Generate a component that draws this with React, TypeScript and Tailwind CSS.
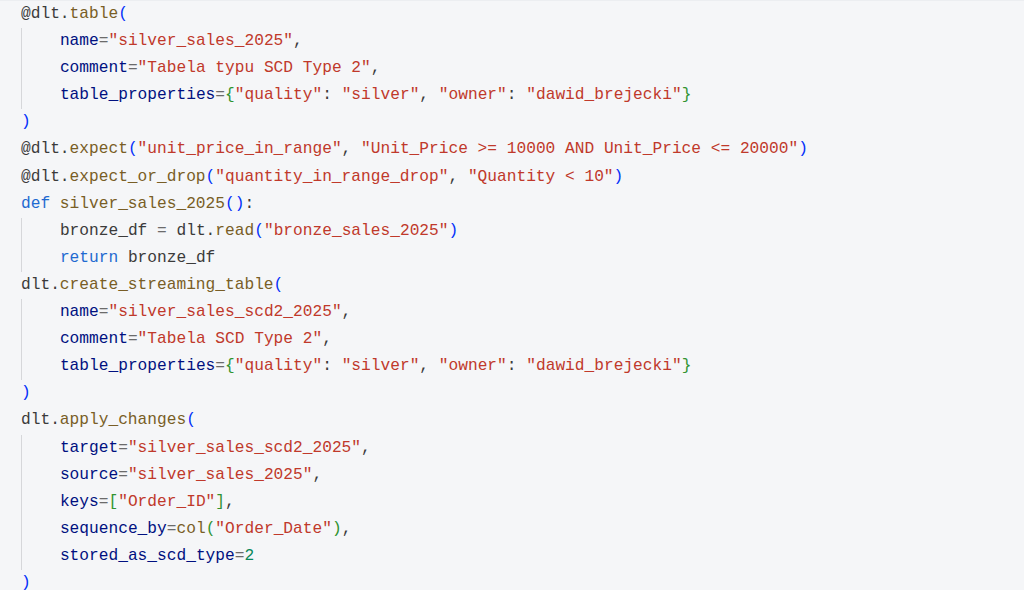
import React from 'react';

type Tok = [string, string];

// token colour classes
const P = 'text-[#001080]'; // parameter names
const F = 'text-[#795e26]'; // function / decorator names
const S = 'text-[#c0392b]'; // strings
const K = 'text-[#1f6ad1]'; // keywords
const T = 'text-[#3b3b3b]'; // plain text
const O = 'text-[#6b6b6b]'; // operators
const B1 = 'text-[#0431fa]'; // bracket level 1
const B2 = 'text-[#319331]'; // bracket level 2
const N = 'text-[#098658]'; // numbers

type Block = { indent: boolean; lines: Tok[][] };

const code: Block[] = [
  { indent: false, lines: [[[T, '@dlt.'], [F, 'table'], [B1, '(']]] },
  {
    indent: true,
    lines: [
      [[P, 'name'], [O, '='], [S, '"silver_sales_2025"'], [T, ',']],
      [[P, 'comment'], [O, '='], [S, '"Tabela typu SCD Type 2"'], [T, ',']],
      [
        [P, 'table_properties'], [O, '='], [B2, '{'], [S, '"quality"'], [T, ': '], [S, '"silver"'],
        [T, ', '], [S, '"owner"'], [T, ': '], [S, '"dawid_brejecki"'], [B2, '}'],
      ],
    ],
  },
  {
    indent: false,
    lines: [
      [[B1, ')']],
      [[T, '@dlt.'], [F, 'expect'], [B1, '('], [S, '"unit_price_in_range"'], [T, ', '],
        [S, '"Unit_Price >= 10000 AND Unit_Price <= 20000"'], [B1, ')']],
      [[T, '@dlt.'], [F, 'expect_or_drop'], [B1, '('], [S, '"quantity_in_range_drop"'], [T, ', '],
        [S, '"Quantity < 10"'], [B1, ')']],
      [[K, 'def '], [F, 'silver_sales_2025'], [B1, '()'], [T, ':']],
    ],
  },
  {
    indent: true,
    lines: [
      [[T, 'bronze_df '], [O, '='], [T, ' dlt.'], [F, 'read'], [B1, '('], [S, '"bronze_sales_2025"'], [B1, ')']],
      [[K, 'return '], [T, 'bronze_df']],
    ],
  },
  { indent: false, lines: [[[T, 'dlt.'], [F, 'create_streaming_table'], [B1, '(']]] },
  {
    indent: true,
    lines: [
      [[P, 'name'], [O, '='], [S, '"silver_sales_scd2_2025"'], [T, ',']],
      [[P, 'comment'], [O, '='], [S, '"Tabela SCD Type 2"'], [T, ',']],
      [
        [P, 'table_properties'], [O, '='], [B2, '{'], [S, '"quality"'], [T, ': '], [S, '"silver"'],
        [T, ', '], [S, '"owner"'], [T, ': '], [S, '"dawid_brejecki"'], [B2, '}'],
      ],
    ],
  },
  {
    indent: false,
    lines: [
      [[B1, ')']],
      [[T, 'dlt.'], [F, 'apply_changes'], [B1, '(']],
    ],
  },
  {
    indent: true,
    lines: [
      [[P, 'target'], [O, '='], [S, '"silver_sales_scd2_2025"'], [T, ',']],
      [[P, 'source'], [O, '='], [S, '"silver_sales_2025"'], [T, ',']],
      [[P, 'keys'], [O, '='], [B2, '['], [S, '"Order_ID"'], [B2, ']'], [T, ',']],
      [[P, 'sequence_by'], [O, '='], [F, 'col'], [B2, '('], [S, '"Order_Date"'], [B2, ')'], [T, ',']],
      [[P, 'stored_as_scd_type'], [O, '='], [N, '2']],
    ],
  },
  { indent: false, lines: [[[B1, ')']]] },
];

function Line({ toks }: { toks: Tok[] }) {
  return (
    <div className="h-[27.1px] leading-[27.1px] whitespace-pre">
      {toks.map(([c, t], i) => (
        <span key={i} className={c}>
          {t}
        </span>
      ))}
    </div>
  );
}

export default function App() {
  return (
    <div className="w-[1024px] h-[590px] overflow-hidden bg-[#f5f6f8] border-t border-[#eceef1]">
      <pre className="pl-[21px] font-['Liberation_Mono',monospace] text-[16.2px] text-[#3b3b3b]">
        {code.map((b, i) =>
          b.indent ? (
            <div key={i} className="border-l border-[#d6d7da] pl-[37.9px]">
              {b.lines.map((l, j) => (
                <Line key={j} toks={l} />
              ))}
            </div>
          ) : (
            <div key={i}>
              {b.lines.map((l, j) => (
                <Line key={j} toks={l} />
              ))}
            </div>
          )
        )}
      </pre>
    </div>
  );
}
